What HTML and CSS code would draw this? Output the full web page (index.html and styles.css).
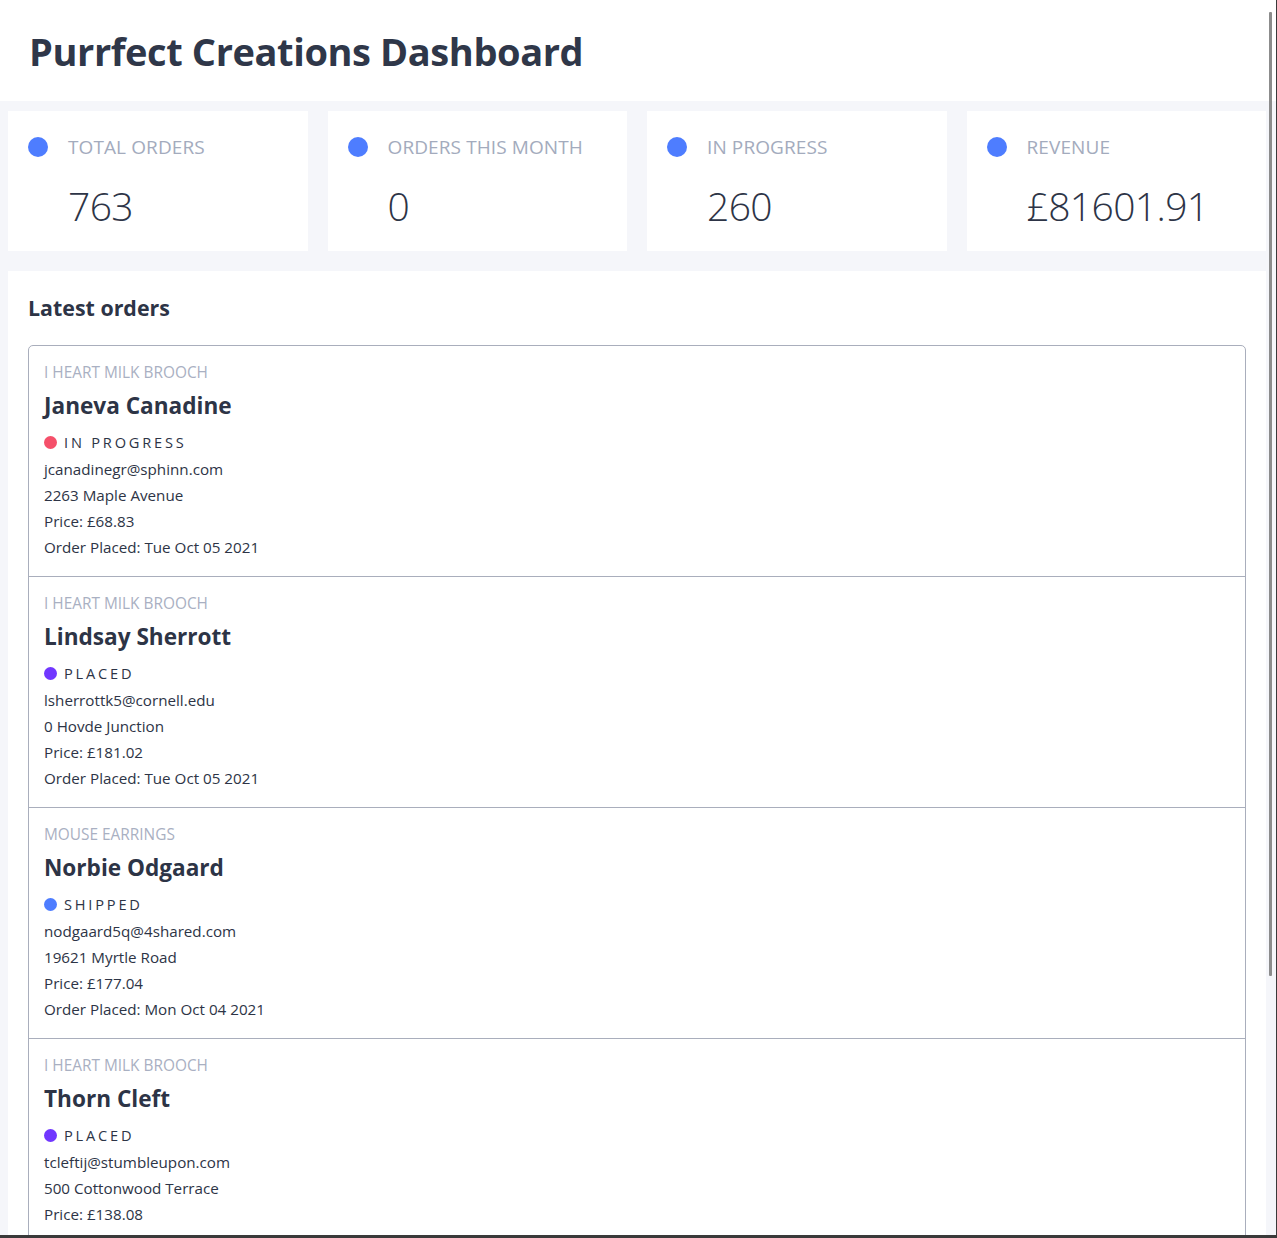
FILE: index.html
```html
<!DOCTYPE html>
<html lang="en">
<head>
<meta charset="utf-8">
<title>Purrfect Creations Dashboard</title>
<link rel="stylesheet" href="styles.css">
</head>
<body>
<header class="top">
  <h1 class="title">Purrfect Creations Dashboard</h1>
</header>
<main class="main">
  <section class="stats">
    <div class="stat">
      <div class="stat-head"><span class="stat-dot"></span><span class="stat-label">TOTAL ORDERS</span></div>
      <div class="stat-value">763</div>
    </div>
    <div class="stat">
      <div class="stat-head"><span class="stat-dot"></span><span class="stat-label">ORDERS THIS MONTH</span></div>
      <div class="stat-value">0</div>
    </div>
    <div class="stat">
      <div class="stat-head"><span class="stat-dot"></span><span class="stat-label">IN PROGRESS</span></div>
      <div class="stat-value">260</div>
    </div>
    <div class="stat">
      <div class="stat-head"><span class="stat-dot"></span><span class="stat-label">REVENUE</span></div>
      <div class="stat-value">£81601.91</div>
    </div>
  </section>
  <section class="panel">
    <h2 class="panel-title">Latest orders</h2>
    <div class="orders">
      <article class="order">
        <div class="order-product">I HEART MILK BROOCH</div>
        <h3 class="order-name">Janeva Canadine</h3>
        <div class="order-status"><span class="status-dot status-progress"></span>IN PROGRESS</div>
        <div class="order-line">jcanadinegr@sphinn.com</div>
        <div class="order-line">2263 Maple Avenue</div>
        <div class="order-line">Price: £68.83</div>
        <div class="order-line">Order Placed: Tue Oct 05 2021</div>
      </article>
      <article class="order">
        <div class="order-product">I HEART MILK BROOCH</div>
        <h3 class="order-name">Lindsay Sherrott</h3>
        <div class="order-status"><span class="status-dot status-placed"></span>PLACED</div>
        <div class="order-line">lsherrottk5@cornell.edu</div>
        <div class="order-line">0 Hovde Junction</div>
        <div class="order-line">Price: £181.02</div>
        <div class="order-line">Order Placed: Tue Oct 05 2021</div>
      </article>
      <article class="order">
        <div class="order-product">MOUSE EARRINGS</div>
        <h3 class="order-name">Norbie Odgaard</h3>
        <div class="order-status"><span class="status-dot status-shipped"></span>SHIPPED</div>
        <div class="order-line">nodgaard5q@4shared.com</div>
        <div class="order-line">19621 Myrtle Road</div>
        <div class="order-line">Price: £177.04</div>
        <div class="order-line">Order Placed: Mon Oct 04 2021</div>
      </article>
      <article class="order">
        <div class="order-product">I HEART MILK BROOCH</div>
        <h3 class="order-name">Thorn Cleft</h3>
        <div class="order-status"><span class="status-dot status-placed"></span>PLACED</div>
        <div class="order-line">tcleftij@stumbleupon.com</div>
        <div class="order-line">500 Cottonwood Terrace</div>
        <div class="order-line">Price: £138.08</div>
        <div class="order-line">Order Placed: Mon Oct 04 2021</div>
      </article>
    </div>
  </section>
</main>
<div class="scroll-thumb"></div>
<div class="frame-right"></div>
<div class="frame-bottom"></div>
</body>
</html>
```

FILE: styles.css
```css
html, body {
  margin: 0;
  padding: 0;
}
body {
  background: #f5f6fa;
  font-family: "Open Sans", "Noto Sans", sans-serif;
  color: #2d3446;
  overflow: hidden;
  height: 1238px;
}
.top {
  background: #ffffff;
  height: 101px;
  padding: 0 29px;
  display: flex;
  align-items: center;
}
.title {
  margin: 0;
  font-size: 38px;
  font-weight: 700;
  color: #2f3749;
  letter-spacing: -0.4px;
}
.main {
  padding: 10px 11px 0 8px;
  display: flex;
  flex-direction: column;
  gap: 20px;
}
.stats {
  display: grid;
  grid-template-columns: repeat(4, 1fr);
  gap: 20px;
}
.stat {
  background: #ffffff;
  height: 140px;
  box-sizing: border-box;
  padding: 23px 20px 0 20px;
}
.stat-head {
  display: flex;
  align-items: center;
  gap: 20px;
}
.stat-dot {
  width: 20px;
  height: 20px;
  border-radius: 50%;
  background: #4e7dff;
  flex: none;
}
.stat-label {
  font-size: 19px;
  color: #a3abbd;
  line-height: 26px;
  margin-top: 0;
  letter-spacing: 0.1px;
}
.stat-value {
  margin: 22px 0 0 40px;
  font-size: 39px;
  font-weight: 300;
  line-height: 48px;
  letter-spacing: -0.6px;
  color: #2d3446;
}
.panel {
  background: #ffffff;
  padding: 20px 20px 0 20px;
  min-height: 1000px;
}
.panel-title {
  margin: 0 0 21px 0;
  font-size: 21.4px;
  font-weight: 700;
  line-height: 32px;
  color: #2d3446;
  padding-top: 1px;
}
.orders {
  border: 1px solid #a9aebc;
  border-radius: 5px;
}
.order {
  padding: 15px 15px 16px 15px;
  border-bottom: 1px solid #a9aebc;
}
.order:last-child {
  border-bottom: none;
}
.order-product {
  font-size: 15.4px;
  line-height: 24px;
  color: #a9b0c2;
}
.order-name {
  margin: 5px 0 0 0;
  font-size: 22.6px;
  font-weight: 700;
  line-height: 32px;
  color: #2d3446;
}
.order-status {
  margin-top: 8px;
  display: flex;
  align-items: center;
  gap: 7px;
  font-size: 14.6px;
  line-height: 24px;
  letter-spacing: 2.8px;
  color: #2d3446;
}
.status-dot {
  width: 13px;
  height: 13px;
  border-radius: 50%;
  flex: none;
}
.status-progress { background: #f5506a; }
.status-placed { background: #7137ff; }
.status-shipped { background: #4e7dff; }
.order-line {
  font-size: 15.2px;
  line-height: 26px;
  color: #2d3446;
}
.order-status + .order-line {
  margin-top: 2px;
}
.scroll-thumb {
  position: fixed;
  left: 1269px;
  top: 12px;
  width: 3px;
  height: 964px;
  background: #8c8c8c;
  border-radius: 1px;
}
.frame-right {
  position: fixed;
  left: 1276px;
  top: 0;
  width: 1px;
  height: 1238px;
  background: #3a3a3a;
}
.frame-bottom {
  position: fixed;
  left: 0;
  top: 1235px;
  width: 1277px;
  height: 3px;
  background: #3a3a3a;
}
```
